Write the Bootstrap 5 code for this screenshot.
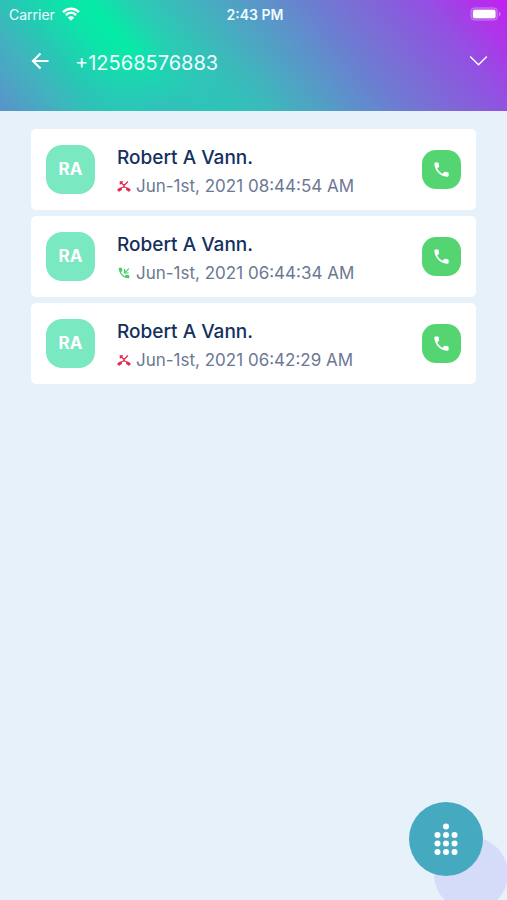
<!DOCTYPE html>
<html lang="en">
<head>
<meta charset="utf-8">
<meta name="viewport" content="width=device-width, initial-scale=1">
<title>Call history</title>
<link href="https://cdn.jsdelivr.net/npm/bootstrap@5.3.0/dist/css/bootstrap.min.css" rel="stylesheet">
<style>
body { font-family: Inter, "Liberation Sans", sans-serif; background: #e7f1fa; }
svg { display: block; flex: none; }
.app-header { color: #f0fcff; background: radial-gradient(ellipse 24% 60% at 34% 100%, #35bdbc 0%, #35bdbc00 100%), linear-gradient(51deg, #5b92cb 0%, #40b4be 11%, #27c8b4 17%, #0ce4aa 25%, #05eca6 30%, #27ceb3 37%, #3fb6bc 46%, #5799c8 57%, #6c7dd1 67%, #796fd5 73%, #9350e2 86%, #c41ff0 100%); }
.status-bar { height: 28px; padding: 0 6px 0 9px; font-size: 14px; }
.status-carrier { gap: 7px; }
.status-time { font-weight: 600; }
.title-bar { height: 83px; padding: 0 19px 18px 31px; }
.title-bar h1 { font-size: 20px; line-height: 24px; font-weight: 400; padding: 4px 0 0 26px; }
.call-list { padding: 18px 31px; gap: 6px; }
.call-item { border-radius: 5px; padding: 12px 15px; min-height: 81px; }
.avatar { width: 49px; height: 49px; border-radius: 16px; background: #7ae8c1; font-size: 17px; font-weight: 700; flex: none; }
.call-text { padding: 4px 0 0 22px; }
.call-name { font-size: 19px; line-height: 24px; font-weight: 500; color: #14305e; }
.call-date { font-size: 17px; line-height: 24px; color: #6c7894; gap: 5px; padding-top: 4px; }
.call-btn { width: 39px; height: 39px; border-radius: 14px; background: #54d572; flex: none; }
.bubble { width: 74px; height: 74px; right: -1px; bottom: -11px; background: #d5dcf9; }
.dial-btn { width: 74px; height: 74px; right: 24px; bottom: 24px; background: #45a9c0; }
</style>
<script src="https://cdn.jsdelivr.net/npm/bootstrap@5.3.0/dist/js/bootstrap.bundle.min.js"></script>
</head>
<body>
<svg width="0" height="0" class="position-absolute" aria-hidden="true">
  <symbol id="phone" viewBox="0 0 24 24"><path fill="currentColor" d="M6.62 10.79c1.44 2.83 3.76 5.14 6.59 6.59l2.2-2.2c.27-.27.67-.36 1.02-.24 1.12.37 2.33.57 3.57.57.55 0 1 .45 1 1V20c0 .55-.45 1-1 1-9.39 0-17-7.61-17-17 0-.55.45-1 1-1h3.5c.55 0 1 .45 1 1 0 1.25.2 2.45.57 3.57.11.35.03.74-.25 1.02l-2.2 2.2z"/></symbol>
  <symbol id="missed" viewBox="0 0 14 14"><path fill="#e5264f" d="M.4 10.4C4 6.7 10 6.7 13.6 10.4c.3.3.3.6 0 .9l-1.3 1.2c-.3.3-.6.3-.9 0-.6-.6-1.2-1-1.900-1.300-.3-.1-.4-.4-.4-.7V9.100c-1.400-.4-2.800-.4-4.200 0v1.400c0 .3-.1.600-.4.7-.7.3-1.300.7-1.900 1.300-.3.3-.6.3-.9 0L.4 11.300c-.3-.3-.3-.600 0-.9z"/><path d="M3.300 5.500V2.800H6M3.500 3 8 7.500M11 2.500 6 7.500" fill="none" stroke="#e5264f" stroke-width="1.200"/></symbol>
  <symbol id="incoming" viewBox="0 0 24 24"><path fill="#43cd67" d="M20 15.500c-1.250 0-2.450-.2-3.570-.57-.35-.11-.74-.03-1.020.24l-2.200 2.200c-2.830-1.440-5.150-3.750-6.590-6.590l2.200-2.210c.28-.26.36-.65.25-1C8.700 6.450 8.500 5.250 8.500 4c0-.55-.45-1-1-1H4c-.55 0-1 .45-1 1 0 9.390 7.610 17 17 17 .55 0 1-.45 1-1v-3.500c0-.55-.45-1-1-1z"/><path d="M20.500 4.500 13.500 11.500M13 5v7h7" fill="none" stroke="#43cd67" stroke-width="2"/></symbol>
</svg>

<header class="app-header">
  <div class="status-bar row g-0 align-items-center">
    <div class="status-carrier col d-flex align-items-center">
      <span>Carrier</span>
      <svg width="18" height="14" viewBox="0 0 18 14" role="img" aria-label="Wi-Fi"><path d="M1 5.200C5.500.6 12.500.6 17 5.200M3.900 8C6.900 5.100 11.100 5.100 14.100 8" fill="none" stroke="#fff" stroke-width="2.500"/><path d="M9 13.700 5.800 10.500C7.500 8.900 10.500 8.900 12.200 10.500z" fill="#fff"/></svg>
    </div>
    <div class="col-auto status-time">2:43 PM</div>
    <div class="col d-flex justify-content-end">
      <svg width="31" height="14" viewBox="0 0 31 14" role="img" aria-label="Battery full"><rect x=".7" y=".7" width="27" height="12.600" rx="4" fill="#fff" fill-opacity=".2" stroke="#fff" stroke-opacity=".2"/><rect x="3" y="2.700" width="22.500" height="8.600" rx="2" fill="#fff"/><path d="M29 4.700c2 .8 2 3.800 0 4.600z" fill="#fff" fill-opacity=".4"/></svg>
    </div>
  </div>
  <div class="title-bar d-flex align-items-center">
    <button type="button" class="btn p-0 border-0 text-white" aria-label="Back"><svg width="18" height="18" viewBox="0 0 18 18"><path d="M17.500 9H2.500M9.500 1.500 2 9l7.500 7.500" fill="none" stroke="currentColor" stroke-width="2.200"/></svg></button>
    <h1 class="mb-0 me-auto">+12568576883</h1>
    <button type="button" class="btn p-0 border-0 text-white" aria-label="More details"><svg width="19" height="12" viewBox="0 0 19 12"><path d="M1.200 1.500 9.500 9.800l8.300-8.300" fill="none" stroke="currentColor" stroke-width="1.400"/></svg></button>
  </div>
</header>

<main>
  <ul class="call-list list-unstyled d-flex flex-column mb-0">
    <li class="call-item bg-white d-flex align-items-center">
      <span class="avatar d-flex align-items-center justify-content-center text-white">RA</span>
      <div class="call-text me-auto">
        <div class="call-name">Robert A Vann.</div>
        <div class="call-date d-flex align-items-center"><svg width="14" height="14" role="img" aria-label="Missed call"><use href="#missed"/></svg><span>Jun-1st, 2021 08:44:54 AM</span></div>
      </div>
      <button type="button" class="call-btn btn p-0 border-0 text-white d-flex align-items-center justify-content-center" aria-label="Call Robert A Vann"><svg width="19" height="19"><use href="#phone"/></svg></button>
    </li>
    <li class="call-item bg-white d-flex align-items-center">
      <span class="avatar d-flex align-items-center justify-content-center text-white">RA</span>
      <div class="call-text me-auto">
        <div class="call-name">Robert A Vann.</div>
        <div class="call-date d-flex align-items-center"><svg width="14" height="14" role="img" aria-label="Incoming call"><use href="#incoming"/></svg><span>Jun-1st, 2021 06:44:34 AM</span></div>
      </div>
      <button type="button" class="call-btn btn p-0 border-0 text-white d-flex align-items-center justify-content-center" aria-label="Call Robert A Vann"><svg width="19" height="19"><use href="#phone"/></svg></button>
    </li>
    <li class="call-item bg-white d-flex align-items-center">
      <span class="avatar d-flex align-items-center justify-content-center text-white">RA</span>
      <div class="call-text me-auto">
        <div class="call-name">Robert A Vann.</div>
        <div class="call-date d-flex align-items-center"><svg width="14" height="14" role="img" aria-label="Missed call"><use href="#missed"/></svg><span>Jun-1st, 2021 06:42:29 AM</span></div>
      </div>
      <button type="button" class="call-btn btn p-0 border-0 text-white d-flex align-items-center justify-content-center" aria-label="Call Robert A Vann"><svg width="19" height="19"><use href="#phone"/></svg></button>
    </li>
  </ul>
</main>

<div class="bubble position-fixed rounded-circle"></div>
<button type="button" class="dial-btn btn p-0 border-0 position-fixed rounded-circle d-flex align-items-center justify-content-center" aria-label="Open dial pad">
  <svg width="24" height="32" viewBox="0 0 24 32" fill="#fff"><circle cx="12" cy="3.500" r="3"/><circle cx="3.500" cy="12" r="3"/><circle cx="12" cy="12" r="3"/><circle cx="20.500" cy="12" r="3"/><circle cx="3.500" cy="20.500" r="3"/><circle cx="12" cy="20.500" r="3"/><circle cx="20.500" cy="20.500" r="3"/><circle cx="3.500" cy="29" r="3"/><circle cx="12" cy="29" r="3"/><circle cx="20.500" cy="29" r="3"/></svg>
</button>
</body>
</html>
